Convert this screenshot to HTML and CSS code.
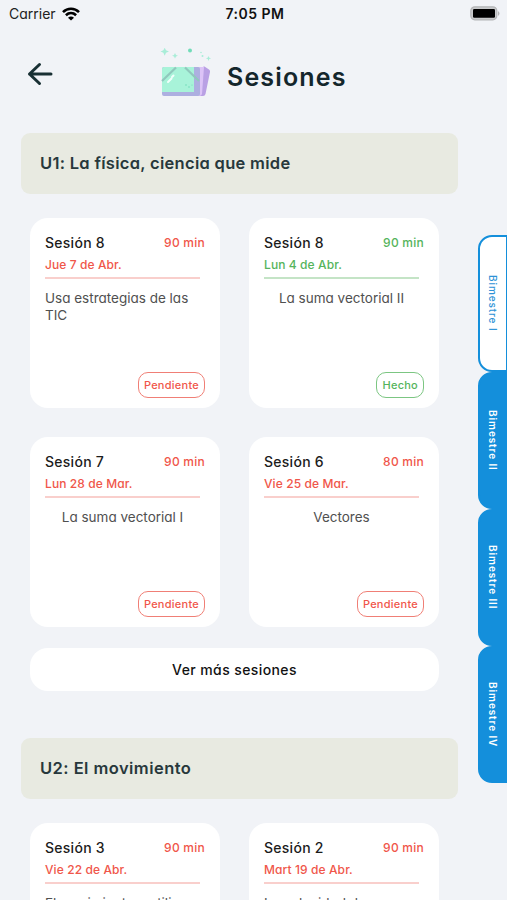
FILE: index.html
```html
<!DOCTYPE html>
<html lang="es">
<head>
<meta charset="utf-8">
<title>Sesiones</title>
<link rel="stylesheet" href="styles.css">
</head>
<body>
<div class="screen">
  <div class="status">
    <div class="carrier"><span>Carrier</span>
      <svg width="18" height="14" viewBox="0 0 18 14" fill="none" stroke="#000" stroke-width="2.6"><path d="M1 5.100C5.500.7 12.500.7 17 5.100M3.900 8.200C6.900 5.400 11.100 5.400 14.100 8.200"/><path d="M9 13.600 6 10.700Q9 8.300 12 10.700Z" fill="#000" stroke="none"/></svg>
    </div>
    <span class="clock">7:05 PM</span>
    <svg class="battery" width="31" height="15" viewBox="0 0 31 15"><rect x=".8" y=".8" width="26" height="13" rx="4" fill="#c9cacc" stroke="#b4b5b7" stroke-width="1.200"/><rect x="3" y="3" width="22" height="8.800" rx="1.200"/><path d="M28 5q3 2.500 0 5Z" fill="#b4b5b7"/></svg>
  </div>
  <header class="header">
    <svg class="back" width="26" height="24" viewBox="0 0 26 24" fill="none" stroke="#193034" stroke-width="3" stroke-linecap="round" stroke-linejoin="round"><path d="M24 12H2.500M12.500 2.500 2.500 12 12.500 21.500"/></svg>
    <svg class="logo" width="52" height="52" viewBox="0 0 52 52">
      <path d="M43 19.500Q43 18 44.500 18.500L49 21.500Q50.500 22.500 50 24L45.500 46Q45 48 43 48H39Z" fill="#b9a0e4"/>
      <path d="M38 19H44L42 46Q41.500 48 39 48H37Z" fill="#dcc3f7"/>
      <rect x="2" y="19" width="38" height="29" rx="2" fill="#adafe0"/>
      <path d="M4 19H34V44H2V21Q2 19 4 19Z" fill="#a8f3d9"/>
      <path d="M2 33 16 19.500M25 19.500 39 33" stroke="#90c8bd" stroke-width="2.200"/>
      <path d="m8 34 3.500-3.500M12 29l1.500-1.500" stroke="#f0fffb" stroke-width="2" stroke-linecap="round"/>
      <g fill="#72dcb9"><circle cx="26" cy="37" r=".8"/><circle cx="29" cy="39" r=".8"/><circle cx="32" cy="37" r=".6"/><circle cx="30" cy="2.500" r="2"/></g>
      <g fill="#a9edd8"><path d="m4.700-.3 1.300 2.500L9 3.500 6 4.800l-1.300 3-1.300-3L.5 3.500l2.900-1.300ZM15 5l1 2 2 .8-2 .8-1 2-1-2-2-.8 2-.8ZM48.500 8l.8 1.700 1.800.6-1.800.7-.8 2-.8-2-1.800-.7 1.800-.6Z"/><circle cx="41" cy="4.500" r=".8"/><circle cx="42.500" cy="8" r="1"/></g>
    </svg>
    <h1>Sesiones</h1>
  </header>
  <div class="columns">
    <main>
      <section class="unit">
        <h2 class="u1">U1: La física, ciencia que mide</h2>
        <div class="grid">
          <article class="card"><div class="top"><h3>Sesión 8</h3><span>90 min</span></div><div class="date">Jue 7 de Abr.</div><p class="left">Usa estrategias de las TIC</p><span class="badge">Pendiente</span></article>
          <article class="card done"><div class="top"><h3>Sesión 8</h3><span>90 min</span></div><div class="date">Lun 4 de Abr.</div><p>La suma vectorial II</p><span class="badge">Hecho</span></article>
          <article class="card"><div class="top"><h3>Sesión 7</h3><span>90 min</span></div><div class="date">Lun 28 de Mar.</div><p>La suma vectorial I</p><span class="badge">Pendiente</span></article>
          <article class="card"><div class="top"><h3>Sesión 6</h3><span>80 min</span></div><div class="date">Vie 25 de Mar.</div><p>Vectores</p><span class="badge">Pendiente</span></article>
        </div>
        <button class="more">Ver más sesiones</button>
      </section>
      <section class="unit">
        <h2 class="u2">U2: El movimiento</h2>
        <div class="grid">
          <article class="card"><div class="top"><h3>Sesión 3</h3><span>90 min</span></div><div class="date">Vie 22 de Abr.</div><p class="left">El movimiento y utili</p></article>
          <article class="card"><div class="top"><h3>Sesión 2</h3><span>90 min</span></div><div class="date">Mart 19 de Abr.</div><p class="left">La velocidad de</p></article>
        </div>
      </section>
    </main>
    <nav class="tabs">
      <div class="tab active"><span>Bimestre I</span></div>
      <div class="tab"><span>Bimestre II</span></div>
      <div class="tab"><span>Bimestre III</span></div>
      <div class="tab"><span>Bimestre IV</span></div>
    </nav>
  </div>
</div>
</body>
</html>
```
FILE: styles.css
```css
* { box-sizing: border-box; }
body { margin: 0; background: #f1f3f7; font-family: Inter, "Liberation Sans", sans-serif; font-feature-settings: "cv11"; }
h1, h2, h3, p { margin: 0; }
svg { display: block; flex: none; }
.screen { height: 900px; overflow: hidden; }
.status { height: 27px; padding: 0 6px 0 9px; display: grid; grid-template-columns: 1fr auto 1fr; align-items: center; color: #111; font-size: 14px; }
.carrier { display: flex; align-items: center; gap: 6px; color: #222; }
.clock { font-weight: 600; letter-spacing: .5px; }
.battery { justify-self: end; }
.header { height: 106px; display: flex; align-items: flex-start; color: #14262c; }
.back { margin: 35px 0 0 27px; }
.logo { margin: 21px 0 0 107px; }
h1 { margin: 34px 0 0 15px; font-size: 25px; line-height: 32px; font-weight: 600; letter-spacing: 1.15px; }
.columns { display: flex; justify-content: space-between; align-items: flex-start; }
main { width: 437px; margin-left: 21px; }
.unit { margin-bottom: 47px; }
h2 { height: 61px; padding-left: 19px; border-radius: 9px; background: #e8eae1; color: #27383c; font-size: 16.5px; line-height: 60px; font-weight: 600; }
.u1 { letter-spacing: .3px; }
.u2 { letter-spacing: .45px; }
.grid { display: grid; grid-template-columns: 190px 190px; gap: 29px; padding: 24px 0 0 9px; }
.card { --tone: #f0564a; --edge: #f07f76; --line: #f9cfcc; height: 190px; border-radius: 18px; background: #fff; padding: 15px 15px 10px; display: flex; flex-direction: column; }
.done { --tone: #55b45c; --edge: #7cc682; --line: #c4e4c6; }
.top { display: flex; justify-content: space-between; line-height: 19px; color: var(--tone); font-size: 12px; font-weight: 500; letter-spacing: .25px; }
h3 { color: #1c1c1c; font-size: 14px; font-weight: 500; letter-spacing: .27px; }
.date { width: 155px; height: 27px; border-bottom: 2px solid var(--line); color: var(--tone); font-size: 12px; line-height: 25px; font-weight: 500; letter-spacing: .1px; }
p { width: 155px; margin-top: 11px; color: #505050; font-size: 13.5px; line-height: 17px; text-align: center; }
.left { text-align: left; }
.badge { margin-top: auto; align-self: flex-end; height: 26px; padding: 0 5px; border: 1.5px solid var(--edge); border-radius: 10px; color: var(--tone); font-size: 11px; line-height: 25px; font-weight: 500; letter-spacing: .25px; }
.more { display: block; width: 409px; height: 43px; margin: 21px 0 0 9px; padding: 0; border: 0; border-radius: 18px; background: #fff; color: #111; font: 500 14px Inter, sans-serif; font-feature-settings: "cv11"; letter-spacing: .4px; }
.tabs { width: 29px; margin-top: 102px; }
.tab { height: 137px; display: flex; align-items: center; justify-content: center; border: 2px solid #148fdb; border-radius: 14px 0 0 14px; background: #148fdb; color: #fff; font-size: 10px; font-weight: 600; letter-spacing: .9px; }
.tab span { writing-mode: vertical-rl; }
.active { background: #fff; color: #2d92d6; font-weight: 500; border-right-width: 1px; }
```
